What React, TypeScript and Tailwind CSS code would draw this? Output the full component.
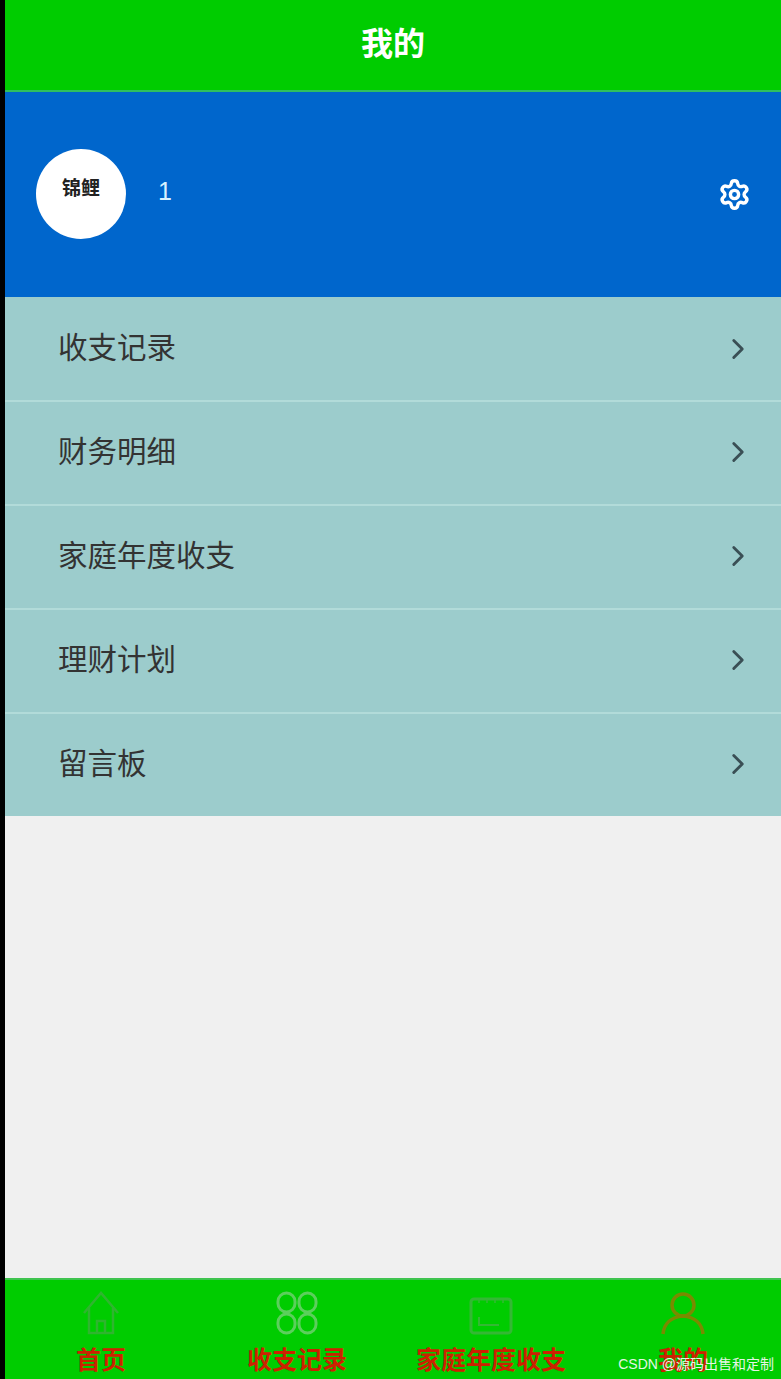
import { ChevronRight, Settings } from "lucide-react"

const font = { fontFamily: '"Liberation Sans", "Noto Sans CJK SC", sans-serif' }

const menu = ["收支记录", "财务明细", "家庭年度收支", "理财计划", "留言板"]

function HomeIcon() {
  return (
    <svg width="40" height="44" viewBox="0 0 40 44" fill="none" stroke="#2fb52f" strokeWidth="2.5">
      <path d="M3 22 20 2l17 20" />
      <path d="M8 17v25h24V17" />
      <path d="M16 42V30h8v12" />
    </svg>
  )
}

function RecordsIcon() {
  return (
    <svg width="44" height="44" viewBox="0 0 44 44" fill="none" stroke="#5ccf5c" strokeWidth="3">
      <rect x="3" y="2" width="17" height="19" rx="8.5" />
      <rect x="24" y="2" width="17" height="19" rx="8.5" />
      <rect x="3" y="23" width="17" height="19" rx="8.5" />
      <rect x="24" y="23" width="17" height="19" rx="8.5" />
    </svg>
  )
}

function YearIcon() {
  return (
    <svg width="44" height="38" viewBox="0 0 44 38" fill="none" stroke="#34b834" strokeWidth="3">
      <rect x="2" y="2" width="40" height="34" rx="3" />
      <path d="M10 2v4M18 2v4M26 2v4M34 2v4" strokeWidth="1.5" />
      <path d="M10 20v8h20" strokeWidth="2" />
    </svg>
  )
}

function UserIcon() {
  return (
    <svg width="44" height="44" viewBox="0 0 44 44" fill="none" stroke="#7a8a00" strokeWidth="3.5">
      <circle cx="22" cy="14" r="11" />
      <path d="M2 43c1-10 8-17 20-18 12 1 19 8 20 18" />
    </svg>
  )
}

const tabs = [
  { label: "首页", icon: <HomeIcon />, width: "w-[192px]" },
  { label: "收支记录", icon: <RecordsIcon />, width: "w-[200px]" },
  { label: "家庭年度收支", icon: <YearIcon />, width: "w-[188px]" },
  { label: "我的", icon: <UserIcon />, width: "w-[196px]" },
]

export default function App() {
  return (
    <div style={font} className="relative flex h-[1379px] w-[781px] overflow-hidden bg-black">
      <div className="ml-[5px] flex w-[776px] flex-col bg-[#f0f0f0]">
        {/* Header */}
        <div className="flex h-[92px] items-center justify-center border-b-2 border-[#2fc05f] bg-[#00cc00] pb-[2px]">
          <span className="text-[32px] font-bold text-white">我的</span>
        </div>

        {/* Profile */}
        <div className="flex h-[205px] items-center bg-[#0066cc] pb-[2px] pl-[31px] pr-[30px]">
          <div className="flex h-[90px] w-[90px] items-center justify-center rounded-full bg-white pb-2">
            <span className="text-[19px] font-bold text-[#222]">锦鲤</span>
          </div>
          <span className="mb-[3px] ml-[32px] text-[25px] font-medium text-[#d8f2ff]">1</span>
          <Settings className="ml-auto mt-[2px] h-[33px] w-[33px] text-white" strokeWidth={2.5} />
        </div>

        {/* Menu */}
        <div className="flex flex-col bg-[#9ccccc]">
          {menu.map((item, i) => (
            <div
              key={item}
              className={`flex items-center pl-[53px] pr-[26px] ${i > 0 ? "h-[104px] border-t-2 border-[#b2dbd9] pb-[2px]" : "h-[103px]"}`}
            >
              <span className="text-[29.5px] text-[#333]">{item}</span>
              <ChevronRight className="ml-auto h-[34px] w-[34px] text-[#3a4f55]" strokeWidth={2} />
            </div>
          ))}
        </div>

        <div className="flex-1" />

        {/* Bottom tabs */}
        <div className="flex h-[101px] border-t-2 border-[#3fc44f] bg-[#00cc00]">
          {tabs.map((tab) => (
            <div key={tab.label} className={`flex ${tab.width} flex-col items-center`}>
              <div className="flex h-[55px] items-end justify-center">{tab.icon}</div>
              <span className="mt-[10px] text-[25px] font-bold leading-[30px] text-[#cc2200]">{tab.label}</span>
            </div>
          ))}
        </div>
      </div>

      {/* Watermark */}
      <span className="absolute bottom-[5px] right-[7px] text-[14px] leading-[20px] text-[#e6f5e6]">CSDN @源码出售和定制</span>
    </div>
  )
}
